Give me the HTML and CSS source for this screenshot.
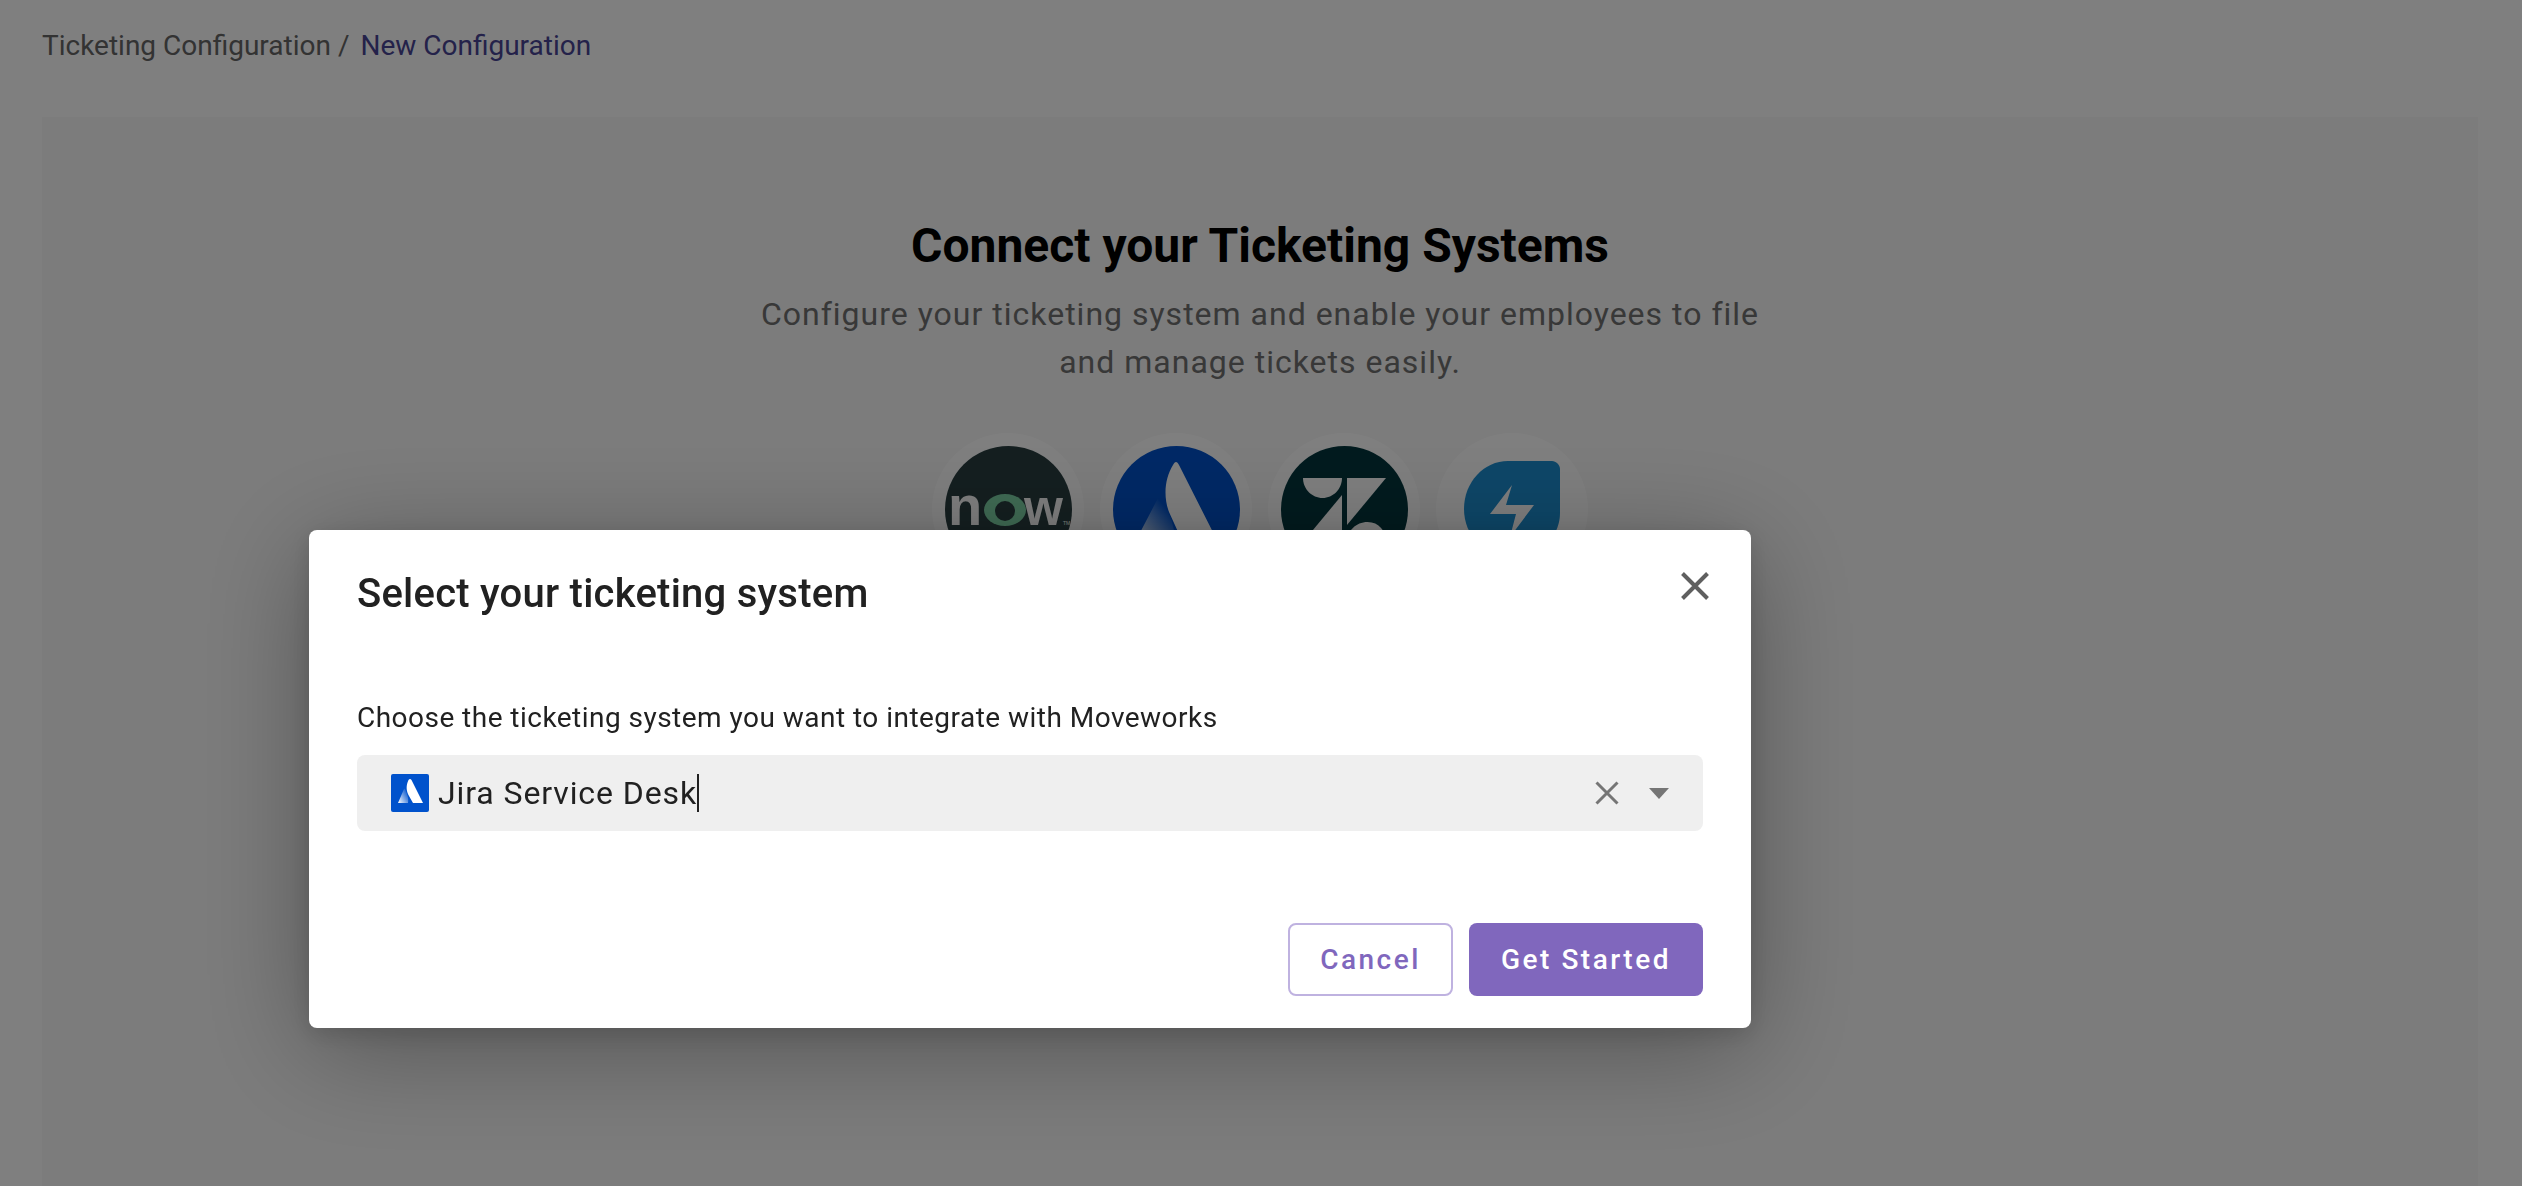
FILE: index.html
```html
<!DOCTYPE html>
<html lang="en">

<head>
    <meta charset="UTF-8">
    <meta name="viewport" content="width=device-width, initial-scale=1.0">
    <title>New Configuration</title>
    <link rel="stylesheet" href="styles.css">
</head>

<body>
    <div class="breadcrumb">
        <span>Ticketing Configuration /</span>
        <span class="breadcrumb-current">New Configuration</span>
    </div>

    <div class="card">
        <h1>Connect your Ticketing Systems</h1>
        <p class="subtitle">Configure your ticketing system and enable your employees to file<br>and manage tickets easily.</p>
        <div class="logo-row">
            <div class="logo-ring">
                <svg class="logo" viewBox="0 0 127 127">
                    <circle cx="63.5" cy="63.5" r="63.5" fill="#293e40" />
                    <text x="3" y="79" class="now-text">n</text>
                    <ellipse cx="60" cy="64" rx="21" ry="16" fill="#7fd6a8" />
                    <ellipse cx="60" cy="65" rx="10" ry="10" fill="#293e40" />
                    <text x="79" y="79" class="now-text now-w">w</text>
                    <text x="118" y="79" class="now-tm">TM</text>
                </svg>
            </div>
            <div class="logo-ring">
                <svg class="logo" viewBox="0 0 127 127">
                    <defs>
                        <linearGradient id="fade" x1="0.9" y1="0.3" x2="0.2" y2="1">
                            <stop offset="0" stop-color="#0052cc" />
                            <stop offset="1" stop-color="#ffffff" />
                        </linearGradient>
                    </defs>
                    <circle cx="63.5" cy="63.5" r="63.5" fill="#0052cc" />
                    <path d="M60 19C52 32 50 50 56 66L76 110H112L66 19C64 15 62 15 60 19Z" fill="#fff" />
                    <path d="M44 54L18 104H62C64 88 58 68 49 54C47 51 45 51 44 54Z" fill="url(#fade)" />
                </svg>
            </div>
            <div class="logo-ring">
                <svg class="logo" viewBox="0 0 127 127">
                    <circle cx="63.5" cy="63.5" r="63.5" fill="#03363d" />
                    <path d="M22 32H61C61 43 52 52 41.500 52C31 52 22 43 22 32Z" fill="#fff" />
                    <path d="M66 32H105L66 79Z" fill="#fff" />
                    <path d="M61 49V96H22Z" fill="#fff" />
                    <path d="M66 96C66 85 75 76 86.500 76C98 76 105 85 105 96Z" fill="#fff" />
                </svg>
            </div>
            <div class="logo-ring logo-ring-plain">
                <svg class="logo logo-fresh" viewBox="0 0 96 96">
                    <path d="M44 0H88C92 0 96 4 96 8V52C96 76 76 96 48 96C21 96 0 75 0 48C0 21 20 0 44 0Z" fill="#1c8ed1" />
                    <path d="M48 24L26 53H52L46 76L70 44H42Z" fill="#fff" />
                </svg>
            </div>
        </div>
    </div>

    <div class="backdrop">
        <div class="modal">
            <div class="modal-header">
                <h2>Select your ticketing system</h2>
                <svg class="close-icon" viewBox="0 0 28 28">
                    <path d="M1.500 1.500L26.500 26.500M26.500 1.500L1.500 26.500" />
                </svg>
            </div>
            <label class="field-label">Choose the ticketing system you want to integrate with Moveworks</label>
            <div class="select-field">
                <svg class="jira-icon" viewBox="0 0 38 38">
                    <defs>
                        <linearGradient id="fade-small" x1="1" y1="0.2" x2="0" y2="1">
                            <stop offset="0" stop-color="#0052cc" />
                            <stop offset="1" stop-color="#ffffff" />
                        </linearGradient>
                    </defs>
                    <rect width="38" height="38" rx="2" fill="#0052cc" />
                    <path d="M17.500 6C15 11 15 17 18 22L22 29H32L20.500 6C19.500 4.500 18.500 4.500 17.500 6Z" fill="#fff" />
                    <path d="M13 15L7 29H17C18 24 16 19 14 15C14 14.500 13 14.500 13 15Z" fill="url(#fade-small)" />
                </svg>
                <span class="select-value">Jira Service Desk</span>
                <span class="caret"></span>
                <svg class="clear-icon" viewBox="0 0 24 24">
                    <path d="M1.500 1.500L22.500 22.500M22.500 1.500L1.500 22.500" />
                </svg>
                <span class="arrow"></span>
            </div>
            <div class="modal-buttons">
                <button class="cancel-button">Cancel</button>
                <button class="start-button">Get Started</button>
            </div>
        </div>
    </div>
</body>

</html>
```

FILE: styles.css
```css
html,
body {
    margin: 0;
    padding: 0;
    height: 100%;
    overflow: hidden;
}

body {
    font-family: Roboto, "Noto Sans", sans-serif;
    background-color: #fff;
    display: flex;
    flex-direction: column;
    padding: 27px 44px 0 42px;
    box-sizing: border-box;
}

.breadcrumb {
    display: flex;
    gap: 11px;
    height: 90px;
    font-size: 28px;
    line-height: 38px;
    color: #666;
}

.breadcrumb-current {
    color: #484494;
}

.card {
    flex: 1;
    background-color: #f8f8f8;
    text-align: center;
    padding-top: 99px;
}

h1 {
    margin: 0;
    font-size: 48px;
    font-weight: 700;
    line-height: 60px;
    color: #000;
}

.subtitle {
    margin: 14px 0 0;
    font-size: 32px;
    line-height: 48px;
    letter-spacing: 1px;
    color: #707070;
}

.logo-row {
    display: flex;
    justify-content: center;
    gap: 16px;
    margin-top: 47px;
}

.logo-ring {
    width: 152px;
    height: 152px;
    border-radius: 50%;
    background-color: #fff;
    display: flex;
    align-items: center;
    justify-content: center;
}

.logo {
    width: 127px;
    height: 127px;
}

.logo-fresh {
    width: 96px;
    height: 96px;
}

.now-text {
    font-family: "Liberation Sans", sans-serif;
    font-size: 56px;
    font-weight: 700;
    fill: #fff;
}

.now-w {
    font-size: 50px;
}

.now-tm {
    font-family: "Liberation Sans", sans-serif;
    font-size: 5px;
    fill: #fff;
}

.backdrop {
    position: fixed;
    top: 0;
    left: 0;
    right: 0;
    bottom: 0;
    background-color: rgba(0, 0, 0, 0.5);
    padding: 530px 0 0 309px;
}

.modal {
    width: 1442px;
    height: 498px;
    box-sizing: border-box;
    padding: 0 48px;
    background-color: #fff;
    border-radius: 8px;
    box-shadow: 0 20px 110px rgba(0, 0, 0, 0.32), 0 6px 24px rgba(0, 0, 0, 0.14);
    display: flex;
    flex-direction: column;
}

.modal-header {
    display: flex;
    justify-content: space-between;
    height: 170px;
}

h2 {
    margin: 0;
    padding-top: 40px;
    font-size: 40px;
    font-weight: 500;
    line-height: 48px;
    letter-spacing: 0.240px;
    color: #212121;
}

.close-icon {
    width: 28px;
    height: 28px;
    margin-top: 42px;
    margin-right: -6px;
    fill: none;
    stroke: #5f5f5f;
    stroke-width: 4;
}

.field-label {
    font-size: 28px;
    line-height: 36px;
    letter-spacing: 0.470px;
    color: #212121;
}

.select-field {
    display: flex;
    align-items: center;
    height: 76px;
    margin-top: 19px;
    padding: 0 34px;
    background-color: #efefef;
    border-radius: 8px;
}

.jira-icon {
    width: 38px;
    height: 38px;
    margin-right: 9px;
}

.select-value {
    font-size: 32px;
    letter-spacing: 0.900px;
    color: #212121;
}

.caret {
    width: 2px;
    height: 38px;
    background-color: #212121;
}

.clear-icon {
    width: 24px;
    height: 24px;
    margin-left: auto;
    margin-right: 30px;
    fill: none;
    stroke: #757575;
    stroke-width: 3;
}

.arrow {
    width: 0;
    height: 0;
    border-left: 10px solid transparent;
    border-right: 10px solid transparent;
    border-top: 11px solid #757575;
}

.modal-buttons {
    display: flex;
    justify-content: flex-end;
    gap: 16px;
    margin-top: 92px;
}

.modal-buttons button {
    height: 73px;
    box-sizing: border-box;
    border-radius: 8px;
    font-family: inherit;
    font-size: 28px;
    font-weight: 500;
    letter-spacing: 2.500px;
    cursor: pointer;
}

.cancel-button {
    width: 165px;
    background-color: #fff;
    border: 2px solid #bfb2e0;
    color: #8067bd;
}

.start-button {
    width: 234px;
    background-color: #8067bd;
    border: none;
    color: #fff;
}
```
